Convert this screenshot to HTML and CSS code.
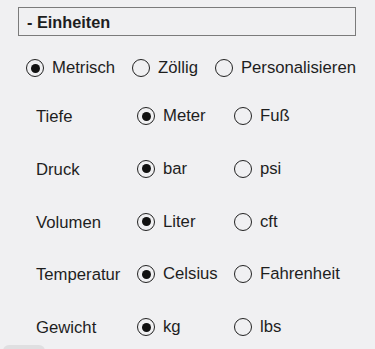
FILE: index.html
```html
<!DOCTYPE html>
<html lang="de">
<head>
<meta charset="utf-8">
<link rel="stylesheet" href="styles.css">
</head>
<body>
<div class="page">
  <div class="header">- Einheiten</div>
  <div class="system">
    <span class="opt"><span class="radio on"></span>Metrisch</span>
    <span class="opt"><span class="radio"></span>Zöllig</span>
    <span class="opt"><span class="radio"></span>Personalisieren</span>
  </div>
  <div class="rows">
    <div class="row"><span class="label">Tiefe</span><span class="opt c1"><span class="radio on"></span>Meter</span><span class="opt"><span class="radio"></span>Fuß</span></div>
    <div class="row"><span class="label">Druck</span><span class="opt c1"><span class="radio on"></span>bar</span><span class="opt"><span class="radio"></span>psi</span></div>
    <div class="row"><span class="label">Volumen</span><span class="opt c1"><span class="radio on"></span>Liter</span><span class="opt"><span class="radio"></span>cft</span></div>
    <div class="row"><span class="label">Temperatur</span><span class="opt c1"><span class="radio on"></span>Celsius</span><span class="opt"><span class="radio"></span>Fahrenheit</span></div>
    <div class="row"><span class="label">Gewicht</span><span class="opt c1"><span class="radio on"></span>kg</span><span class="opt"><span class="radio"></span>lbs</span></div>
  </div>
  <div class="button"></div>
</div>
</body>
</html>
```
FILE: styles.css
```css
html, body {
  margin: 0;
  padding: 0;
  background: #f0f0f2;
}
body {
  font-family: "Liberation Sans", Arial, sans-serif;
  color: #1e1e1e;
  font-size: 16.7px;
}
.page {
  padding-top: 7px;
  height: 349px;
  box-sizing: border-box;
  overflow: hidden;
}
.header {
  box-sizing: border-box;
  height: 29px;
  margin: 0 19px 0 18px;
  border: 1px solid #7b7b7b;
  padding: 2px 0 0 8px;
  font-weight: bold;
  font-size: 16.3px;
  line-height: 25px;
}
.system {
  display: flex;
  align-items: center;
  height: 24px;
  margin-top: 20px;
  padding-left: 26px;
  gap: 17px;
}
.opt {
  display: flex;
  align-items: center;
  gap: 8px;
  line-height: 24px;
}
.radio {
  box-sizing: border-box;
  width: 18px;
  height: 18px;
  border: 1.8px solid #222;
  border-radius: 50%;
  display: flex;
  align-items: center;
  justify-content: center;
  flex: none;
}
.radio.on::after {
  content: "";
  width: 9px;
  height: 9px;
  border-radius: 50%;
  background: #111;
}
.rows {
  display: flex;
  flex-direction: column;
  gap: 28.75px;
  margin-top: 24px;
}
.row {
  display: flex;
  align-items: center;
  height: 24px;
  padding-left: 36px;
}
.label {
  width: 101px;
  padding-top: 2px;
}
.c1 {
  width: 97px;
}
.button {
  width: 42px;
  height: 30px;
  margin: 6px 0 0 3px;
  border-radius: 6px;
  background: #dfdfe1;
}
```
